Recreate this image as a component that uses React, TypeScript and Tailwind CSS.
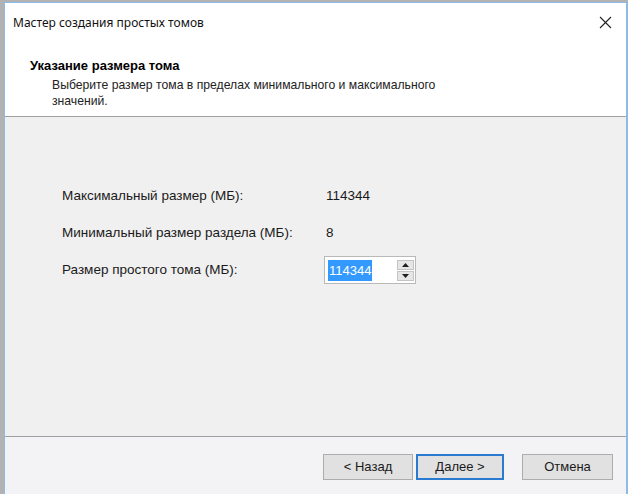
import React from "react";

const sans = { fontFamily: '"Liberation Sans", Arial, sans-serif' };

function SpinArrow({ up }: { up?: boolean }) {
  return (
    <svg width="7" height="4" viewBox="0 0 7 4">
      <polygon points={up ? "0,4 7,4 3.5,0" : "0,0 7,0 3.5,4"} fill="#1f1f1f" />
    </svg>
  );
}

function WizardButton({ label, primary }: { label: string; primary?: boolean }) {
  return (
    <button
      className={`w-full h-[26px] flex items-center justify-center text-[13px] text-[#1a1a1a] bg-[#e1e1e1] ${
        primary ? "border-2 border-[#2a7ad2]" : "border border-[#adadad]"
      }`}
    >
      {label}
    </button>
  );
}

export default function App() {
  return (
    <div
      className="w-[628px] h-[494px] flex bg-[#b2b2b2] pl-[4px] pt-[2px] overflow-hidden"
      style={sans}
    >
      <div className="flex-1 flex flex-col bg-white border-l border-t border-r-2 border-[#8dbbe6]">
        {/* title bar */}
        <div className="h-[39px] flex items-center justify-between pl-[8px] pr-[14px] shrink-0">
          <span
            className="text-[12px] text-[#111]"
            style={{ fontFamily: '"Noto Sans", "Open Sans", sans-serif' }}
          >
            Мастер создания простых томов
          </span>
          <svg width="13" height="13" viewBox="0 0 13 13">
            <path d="M1 1 L12 12 M12 1 L1 12" stroke="#222" strokeWidth="1.1" />
          </svg>
        </div>

        {/* header */}
        <div className="h-[75px] shrink-0 pl-[25px] pt-[16px] border-b border-[#a0a0a0]">
          <div className="text-[13px] font-bold leading-[16px] text-black">
            Указание размера тома
          </div>
          <div className="pl-[22px] pt-[3px] text-[12.2px] leading-[16px] text-[#222] w-[420px]">
            Выберите размер тома в пределах минимального и максимального
            <br />
            значений.
          </div>
        </div>

        {/* body */}
        <div className="flex-1 bg-[#f0f0f0] pl-[57px] pt-[69px] text-[13.5px] text-[#1a1a1a]">
          <div className="flex items-center h-[20px]">
            <div className="w-[262px]">Максимальный размер (МБ):</div>
            <div className="pl-[2px]">114344</div>
          </div>
          <div className="flex items-center h-[20px] mt-[17px]">
            <div className="w-[262px]">Минимальный размер раздела (МБ):</div>
            <div className="pl-[2px]">8</div>
          </div>
          <div className="flex items-center h-[28px] mt-[13px]">
            <div className="w-[262px] pt-[1px]">Размер простого тома (МБ):</div>
            <div className="w-[92px] h-[28px] bg-white border border-[#b9b9b9] flex items-center pl-[3px] pr-[1px]">
              <span className="bg-[#3399ff] text-white text-[13px] h-[21px] leading-[21px] px-[1px]">
                114344
              </span>
              <div className="ml-auto flex flex-col gap-[1px]">
                <div className="w-[17px] h-[10px] bg-[#e6e6e6] border border-[#c4c4c4] flex items-center justify-center">
                  <SpinArrow up />
                </div>
                <div className="w-[17px] h-[10px] bg-[#e6e6e6] border border-[#c4c4c4] flex items-center justify-center">
                  <SpinArrow />
                </div>
              </div>
            </div>
          </div>
        </div>

        {/* footer */}
        <div className="h-[58px] shrink-0 bg-[#f3f2f5] border-t border-[#a0a0a0] flex justify-end items-start pt-[17px] pr-[13px]">
          <div className="w-[90px]">
            <WizardButton label="< Назад" />
          </div>
          <div className="w-[88px] ml-[3px]">
            <WizardButton label="Далее >" primary />
          </div>
          <div className="w-[91px] ml-[18px]">
            <WizardButton label="Отмена" />
          </div>
        </div>
      </div>
    </div>
  );
}
